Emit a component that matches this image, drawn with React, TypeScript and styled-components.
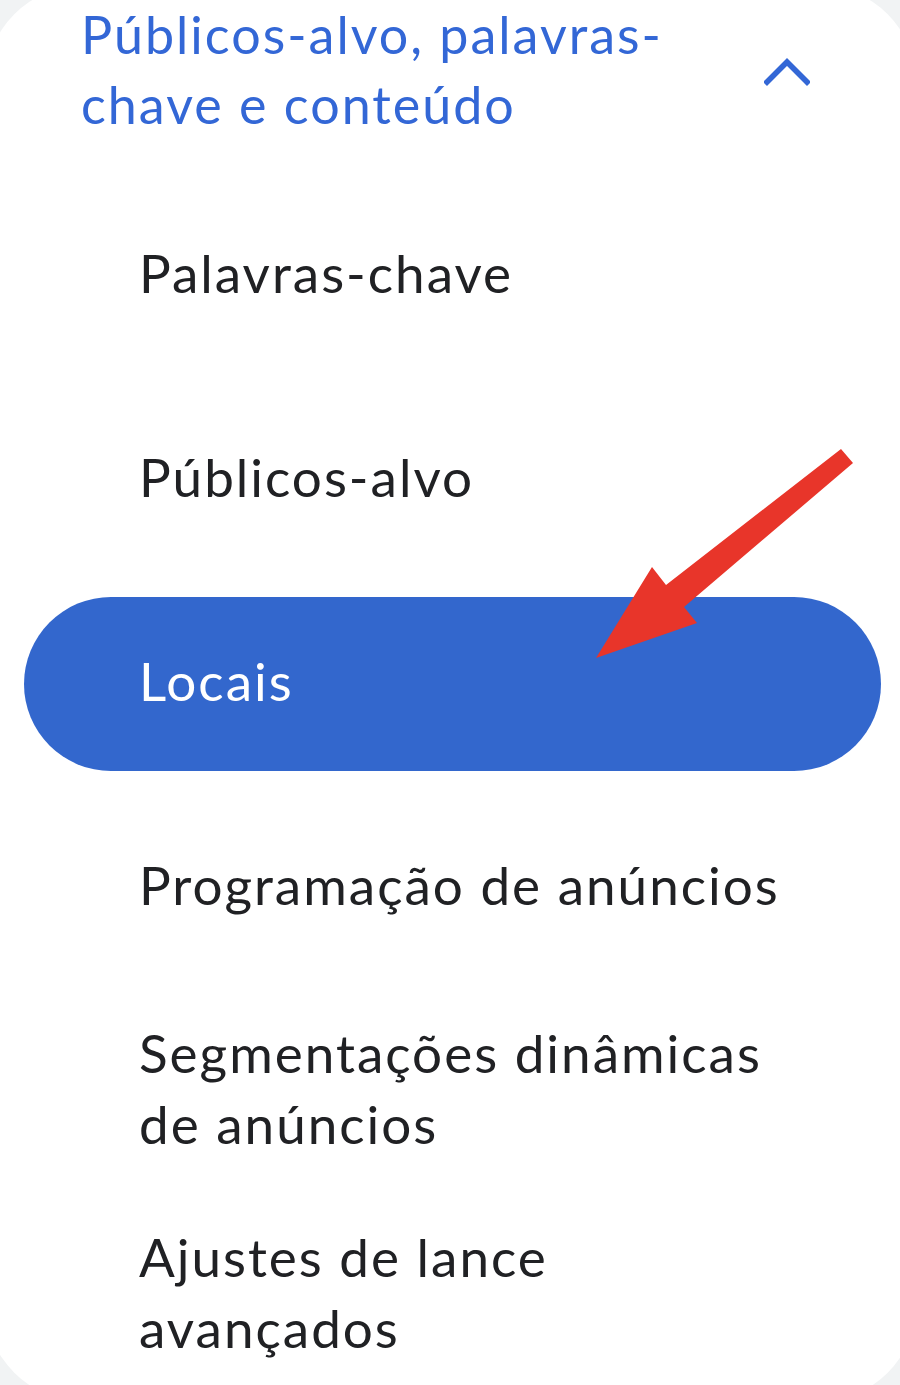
import React from "react";
import styled, { createGlobalStyle } from "styled-components";

const GlobalStyle = createGlobalStyle`
  html, body {
    margin: 0;
    padding: 0;
    background: #f1f3f4;
    overflow: hidden;
  }
  * { box-sizing: border-box; }
`;

const Page = styled.div`
  position: relative;
  width: 900px;
  height: 1385px;
  overflow: hidden;
  background: #f1f3f4;
  font-family: Lato, "Noto Sans", sans-serif;
`;

const Card = styled.nav`
  margin: -15px -17px 0 -15px;
  background: #ffffff;
  border-radius: 100px;
  padding: 0 36px 19px 39px;
  display: flex;
  flex-direction: column;
  gap: 30px;
`;

const SectionHeader = styled.div`
  height: 174px;
  display: flex;
  align-items: center;
  justify-content: space-between;
  padding: 0 71px 6px 57px;
`;

const HeaderTitle = styled.span`
  max-width: 620px;
  color: #3367d6;
  font-size: 52px;
  line-height: 70px;
  letter-spacing: 2px;
  font-weight: 400;
`;

const ChevronIcon = styled.svg`
  flex: none;
  margin-top: 6px;
`;

const NavItem = styled.div<{ $active?: boolean }>`
  height: 174px;
  display: flex;
  align-items: center;
  padding: 0 0 8px 115px;
  border-radius: 87px;
  background: ${(p) => (p.$active ? "#3367cd" : "transparent")};
  color: ${(p) => (p.$active ? "#ffffff" : "#202124")};
`;

const ItemLabel = styled.span`
  max-width: 648px;
  font-size: 53px;
  line-height: 71px;
  letter-spacing: 2px;
  font-weight: 400;
`;

const Overlay = styled.svg`
  position: absolute;
  left: 0;
  top: 0;
  width: 900px;
  height: 1385px;
  pointer-events: none;
`;

const Chevron = () => (
  <ChevronIcon width="46" height="28" viewBox="0 0 46 28" fill="none">
    <path d="M3 24 L23 4 L43 24" stroke="#3367d6" strokeWidth="5.5" strokeLinecap="square" strokeLinejoin="miter" />
  </ChevronIcon>
);

const items = [
  { label: "Palavras-chave" },
  { label: "Públicos-alvo" },
  { label: "Locais", active: true },
  { label: "Programação de anúncios" },
  { label: "Segmentações dinâmicas de anúncios" },
  { label: "Ajustes de lance avançados" },
];

export default function App() {
  return (
    <>
      <GlobalStyle />
      <Page>
        <Card>
          <SectionHeader>
            <HeaderTitle>Públicos-alvo, palavras-chave e conteúdo</HeaderTitle>
            <Chevron />
          </SectionHeader>
          {items.map((it) => (
            <NavItem key={it.label} $active={it.active}>
              <ItemLabel>{it.label}</ItemLabel>
            </NavItem>
          ))}
        </Card>
        <Overlay viewBox="0 0 900 1385">
          <polygon
            points="596,658 652,567 666,585 841,449 853,463 684,607 697,623"
            fill="#e8352a"
          />
        </Overlay>
      </Page>
    </>
  );
}
